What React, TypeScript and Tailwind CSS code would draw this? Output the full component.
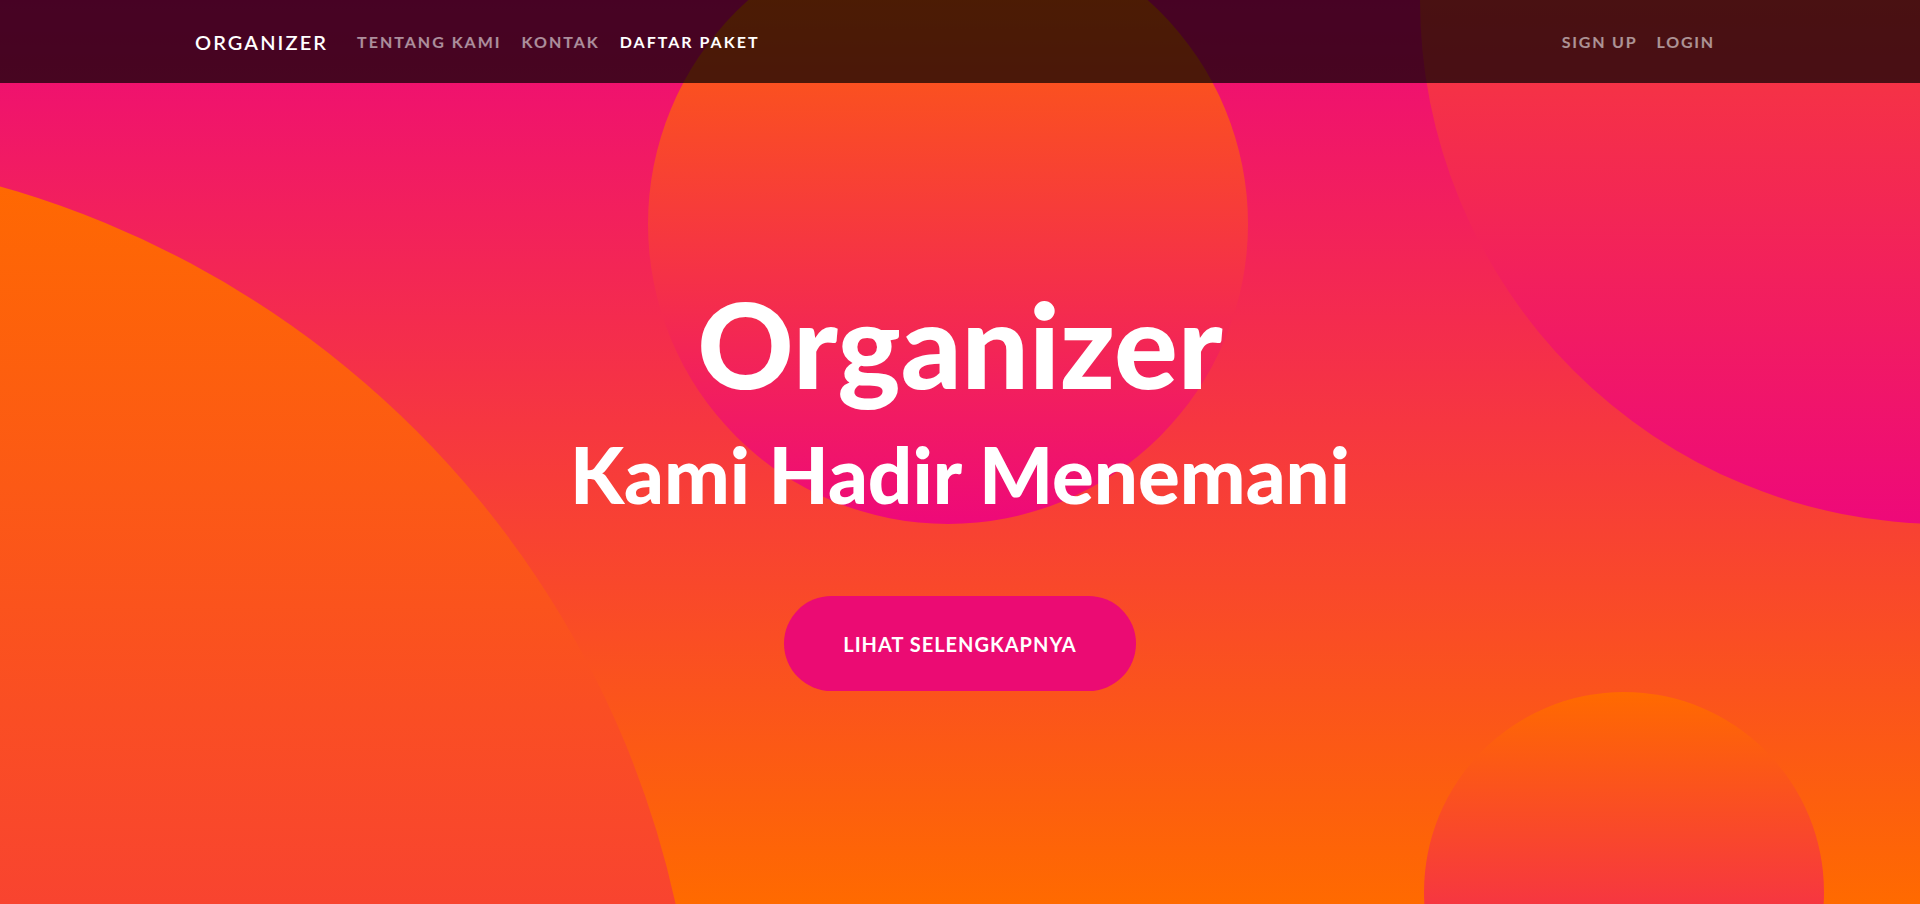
import React from 'react';

const navLinks = [
    { label: 'TENTANG KAMI', active: false },
    { label: 'KONTAK', active: false },
    { label: 'DAFTAR PAKET', active: true },
];

const Navbar = () => {
    return (
        <nav className="absolute top-0 left-0 right-0 z-20 h-[83px] bg-black/70 flex items-center justify-between pl-[195px] pr-[205px]">
            <div className="flex items-center">
                <a href="#" className="text-white text-[20px] font-semibold tracking-[2.1px] mr-[29px]">
                    ORGANIZER
                </a>
                <ul className="flex items-center gap-[20px]">
                    {navLinks.map((link) => (
                        <li key={link.label}>
                            <a
                                href="#"
                                className={
                                    link.active
                                        ? 'text-white text-[16px] font-bold tracking-[2px]'
                                        : 'text-white/55 text-[16px] font-bold tracking-[2px]'
                                }
                            >
                                {link.label}
                            </a>
                        </li>
                    ))}
                </ul>
            </div>
            <ul className="flex items-center gap-[19px]">
                <li>
                    <a href="#" className="text-white/55 text-[16px] font-bold tracking-[1.8px]">SIGN UP</a>
                </li>
                <li>
                    <a href="#" className="text-white/55 text-[16px] font-bold tracking-[1.8px]">LOGIN</a>
                </li>
            </ul>
        </nav>
    );
};

const App = () => {
    return (
        <div className="font-['Lato','Open_Sans',sans-serif]">
            <header className="relative h-[904px] overflow-hidden bg-[linear-gradient(to_bottom,#ee0979,#ff6a00)]">
                {/* background circles */}
                <div className="absolute left-[-1222px] top-[150px] w-[1920px] h-[1920px] rounded-full bg-[linear-gradient(to_bottom,#ff6a00,#ee0979)]" />
                <div className="absolute left-[648px] top-[-76px] w-[600px] h-[600px] rounded-full bg-[linear-gradient(to_bottom,#ff6a00,#ee0979)]" />
                <div className="absolute left-[1420px] top-[-524px] w-[1048px] h-[1048px] rounded-full bg-[linear-gradient(to_bottom,#ff6a00,#ee0979)]" />
                <div className="absolute left-[1424px] top-[692px] w-[400px] h-[400px] rounded-full bg-[linear-gradient(to_bottom,#ff6a00,#ee0979)]" />

                <Navbar />

                <div className="relative z-10 flex flex-col items-center pt-[284px] text-white">
                    <h1 className="text-[119px] leading-none font-black">Organizer</h1>
                    <h2 className="mt-[32px] text-[78px] leading-none font-black">Kami Hadir Menemani</h2>
                    <button className="mt-[83px] w-[352px] h-[95px] rounded-full bg-[#eb0b73] text-white text-[20px] font-bold tracking-[1px]">
                        LIHAT SELENGKAPNYA
                    </button>
                </div>
            </header>
        </div>
    );
};

export default App;
